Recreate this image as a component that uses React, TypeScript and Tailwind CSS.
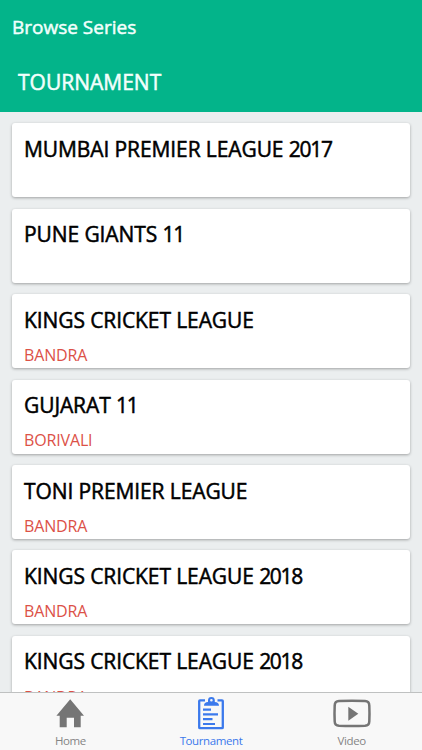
type Series = {
  name: string;
  year?: string;
  place?: string;
};

const series: Series[] = [
  { name: 'MUMBAI PREMIER LEAGUE', year: '2017' },
  { name: 'PUNE GIANTS', year: '11' },
  { name: 'KINGS CRICKET LEAGUE', place: 'BANDRA' },
  { name: 'GUJARAT', year: '11', place: 'BORIVALI' },
  { name: 'TONI PREMIER LEAGUE', place: 'BANDRA' },
  { name: 'KINGS CRICKET LEAGUE', year: '2018', place: 'BANDRA' },
  { name: 'KINGS CRICKET LEAGUE', year: '2018', place: 'BANDRA' },
];

function HomeIcon() {
  return (
    <svg className="h-9 w-10 overflow-visible" viewBox="0 0 40 36" fill="#757575">
      <path d="M20.2 6.3 34 22.7H30.7V34.3H24V24.7H16.7V34.3H9.7V22.7H6.4Z" />
    </svg>
  );
}

function ClipboardIcon() {
  return (
    <svg className="h-9 w-10 overflow-visible" viewBox="0 0 40 36" fill="none" stroke="#3b79ec">
      <path
        d="M14 7.3H9Q8.2 7.3 8.2 8.1V34.4Q8.2 35.2 9 35.2H31Q31.8 35.2 31.8 34.4V8.1Q31.8 7.3 31 7.3H26.5"
        strokeWidth="2.3"
      />
      <path
        d="M13 12.7C13 10 14.5 9.2 17 9V7.3A3.4 3.4 0 0 1 23.8 7.3V9C26.3 9.2 28 10 28 12.7ZM20.4 5.9A1.3 1.3 0 1 0 20.4 8.5A1.3 1.3 0 1 0 20.4 5.9Z"
        fill="#3b79ec"
        fillRule="evenodd"
        stroke="none"
      />
      <path d="M12 16.7H20M12 21.4H27M12 26.2H21.5M12 31H24" strokeWidth="2.2" />
    </svg>
  );
}

function VideoIcon() {
  return (
    <svg className="h-9 w-10 overflow-visible" viewBox="0 0 40 36" fill="none">
      <path
        d="M7 8.1Q20 7.3 33 8.1Q37.2 8.3 37.3 12.5Q37.7 20.5 37.3 28.5Q37.2 32.5 33 32.8Q20 33.4 7 32.8Q2.8 32.5 2.7 28.5Q2.3 20.5 2.7 12.5Q2.8 8.3 7 8.1Z"
        stroke="#757575"
        strokeWidth="2.5"
      />
      <path d="M16.3 13.7V27.7L26.3 20.7Z" fill="#757575" />
    </svg>
  );
}

const tabs = [
  { label: 'Home', icon: HomeIcon, active: false },
  { label: 'Tournament', icon: ClipboardIcon, active: true },
  { label: 'Video', icon: VideoIcon, active: false },
];

export default function App() {
  return (
    <div className="flex h-[750px] w-full flex-col overflow-hidden bg-[#ebeeef] font-['Open_Sans','Noto_Sans',sans-serif]">
      <header className="h-[111.5px] shrink-0 bg-[#03b48a] text-[#f2fffc]">
        <div className="px-3 pt-[14px] text-[19px] leading-[26px] [-webkit-text-stroke:0.5px]">
          Browse Series
        </div>
        <h1 className="px-[18px] pt-7 text-[21px] leading-7 [-webkit-text-stroke:0.5px]">TOURNAMENT</h1>
      </header>

      <main className="flex min-h-0 flex-1 flex-col gap-[11.45px] overflow-hidden px-3 pt-[11.7px]">
        {series.map((item, i) => (
          <article
            key={i}
            className="h-[74px] shrink-0 rounded-[3px] bg-white px-3 pt-[11.6px] shadow-[0_1px_3px_rgba(0,0,0,0.32)]"
          >
            <h2 className="text-[21px] leading-7 tracking-[-0.1px] whitespace-nowrap text-black [-webkit-text-stroke:0.5px]">
              {item.name}
              {item.year && (
                <>
                  {' '}
                  <span className="tracking-[-1.3px]">{item.year}</span>
                </>
              )}
            </h2>
            {item.place && (
              <p className="pt-[9.2px] text-base leading-6 tracking-[-0.15px] text-[#dc5147]">{item.place}</p>
            )}
          </article>
        ))}
      </main>

      <nav className="grid h-[58px] shrink-0 grid-cols-3 border-t border-[#bfc1c1] bg-[#f8f8f8]">
        {tabs.map(({ label, icon: Icon, active }) => (
          <button key={label} className="flex flex-col items-center">
            <Icon />
            <span
              className={`pt-[4px] text-[11.5px] leading-4 tracking-[-0.4px] ${active ? 'text-[#3b79ec]' : 'text-[#858585]'}`}
            >
              {label}
            </span>
          </button>
        ))}
      </nav>
    </div>
  );
}
